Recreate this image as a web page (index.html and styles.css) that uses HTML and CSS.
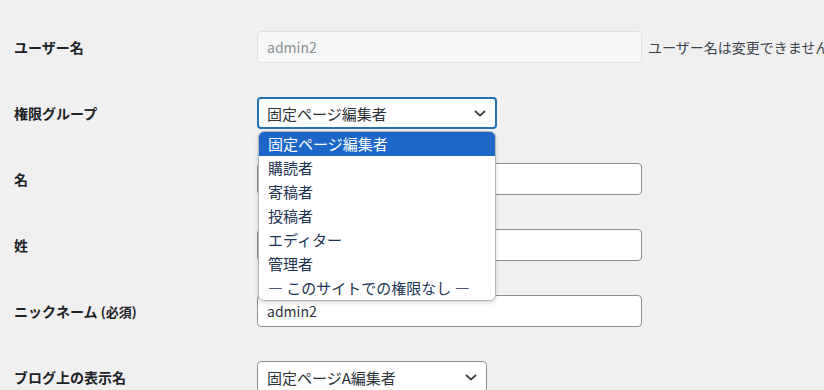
FILE: index.html
```html
<!DOCTYPE html>
<html lang="ja">
<head>
    <meta charset="UTF-8">
    <meta name="viewport" content="width=device-width, initial-scale=1.0">
    <title>ユーザー編集</title>
    <link rel="stylesheet" href="styles.css">
</head>
<body>

<div class="form-table">
    <div class="form-row">
        <div class="form-label">ユーザー名</div>
        <div class="form-field">
            <input type="text" class="text-input" value="admin2" disabled>
            <span class="description">ユーザー名は変更できません。</span>
        </div>
    </div>

    <div class="form-row">
        <div class="form-label">権限グループ</div>
        <div class="form-field">
            <div class="select-wrap">
                <div class="select-box select-role is-open">
                    <span>固定ページ編集者</span>
                    <svg class="chevron" width="12" height="7" viewBox="0 0 12 7"><path d="M1 1l5 4.5L11 1" fill="none" stroke="#3c434a" stroke-width="1.8"/></svg>
                </div>
                <!-- 開いているドロップダウン -->
                <ul class="dropdown">
                    <li class="selected">固定ページ編集者</li>
                    <li>購読者</li>
                    <li>寄稿者</li>
                    <li>投稿者</li>
                    <li>エディター</li>
                    <li>管理者</li>
                    <li>— このサイトでの権限なし —</li>
                </ul>
            </div>
        </div>
    </div>

    <div class="form-row">
        <div class="form-label">名</div>
        <div class="form-field">
            <input type="text" class="text-input" value="">
        </div>
    </div>

    <div class="form-row">
        <div class="form-label">姓</div>
        <div class="form-field">
            <input type="text" class="text-input" value="">
        </div>
    </div>

    <div class="form-row">
        <div class="form-label">ニックネーム <span class="required">(必須)</span></div>
        <div class="form-field">
            <input type="text" class="text-input" value="admin2">
        </div>
    </div>

    <div class="form-row">
        <div class="form-label">ブログ上の表示名</div>
        <div class="form-field">
            <div class="select-box select-display">
                <span>固定ページA編集者</span>
                <svg class="chevron" width="12" height="7" viewBox="0 0 12 7"><path d="M1 1l5 4.5L11 1" fill="none" stroke="#3c434a" stroke-width="1.8"/></svg>
            </div>
        </div>
    </div>
</div>

</body>
</html>
```

FILE: styles.css
```css
body {
    font-family: "Noto Sans CJK JP", "Noto Sans", sans-serif;
    margin: 0;
    padding: 0;
    background-color: #f0f0f1;
    color: #1d2327;
    overflow: hidden;
    height: 390px;
}
.form-table {
    padding-top: 14px;
}
.form-row {
    display: flex;
    align-items: center;
    height: 66px;
}
.form-label {
    width: 243px;
    padding-left: 14px;
    font-size: 14px;
    font-weight: 700;
    color: #1d2327;
    flex-shrink: 0;
}
.required {
    font-size: 13px;
}
.form-field {
    display: flex;
    align-items: center;
    white-space: nowrap;
}
.text-input {
    box-sizing: border-box;
    width: 385px;
    height: 32px;
    margin: 0;
    padding: 0 9px;
    border: 1px solid #8c8f94;
    border-radius: 4px;
    background-color: white;
    font-family: inherit;
    font-size: 14px;
    color: #2c3338;
}
.text-input:disabled {
    background-color: #f6f7f7;
    border-color: #e0e0e2;
    color: #8c8f94;
}
.description {
    margin-left: 6px;
    font-size: 14px;
    color: #3c434a;
}
.select-wrap {
    position: relative;
}
.select-box {
    box-sizing: border-box;
    height: 32px;
    display: flex;
    align-items: center;
    justify-content: space-between;
    padding: 0 9px 0 9px;
    border: 1px solid #8c8f94;
    border-radius: 4px;
    background-color: white;
    font-size: 15px;
    color: #2c3338;
}
.select-role {
    width: 240px;
}
.select-display {
    width: 230px;
}
.select-box.is-open {
    border: 2px solid #2271b1;
    padding-left: 8px;
}
.chevron {
    display: block;
}
.dropdown {
    position: absolute;
    top: 34px;
    left: 1px;
    width: 238px;
    box-sizing: border-box;
    margin: 0;
    padding: 0;
    list-style: none;
    background-color: white;
    border: 1px solid #b4b6ba;
    border-radius: 6px;
    overflow: hidden;
    box-shadow: 0 2px 4px rgba(0,0,0,0.15);
}
.dropdown li {
    height: 24px;
    line-height: 24px;
    padding-left: 9px;
    font-size: 15px;
    color: #1d3552;
}
.dropdown li.selected {
    background-color: #1e67c9;
    color: white;
}
```
